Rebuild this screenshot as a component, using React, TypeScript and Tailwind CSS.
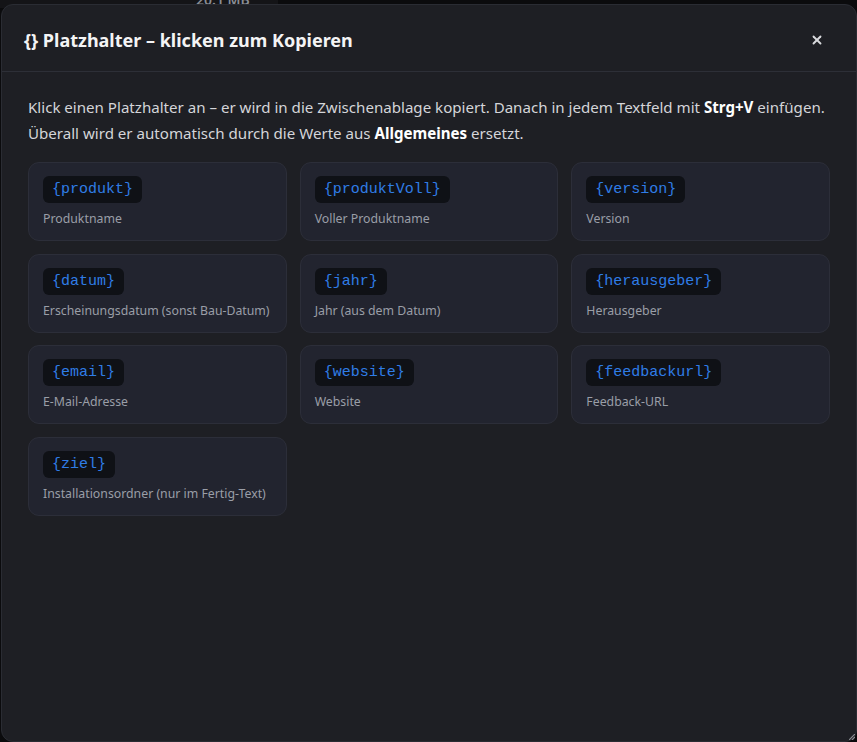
import React from "react";
import { X } from "lucide-react";

type Placeholder = { key: string; label: string };

const placeholders: Placeholder[] = [
  { key: "{produkt}", label: "Produktname" },
  { key: "{produktVoll}", label: "Voller Produktname" },
  { key: "{version}", label: "Version" },
  { key: "{datum}", label: "Erscheinungsdatum (sonst Bau-Datum)" },
  { key: "{jahr}", label: "Jahr (aus dem Datum)" },
  { key: "{herausgeber}", label: "Herausgeber" },
  { key: "{email}", label: "E-Mail-Adresse" },
  { key: "{website}", label: "Website" },
  { key: "{feedbackurl}", label: "Feedback-URL" },
  { key: "{ziel}", label: "Installationsordner (nur im Fertig-Text)" },
];

function PlaceholderCard({ item }: { item: Placeholder }) {
  return (
    <button
      type="button"
      className="flex flex-col items-start rounded-[11px] border border-[#2c2e39] bg-[#22242f] px-[14px] pt-[13px] pb-[12px] text-left"
    >
      <span className="flex h-[27px] items-center rounded-[6px] bg-[#0f1116] px-[9px] text-[15px] leading-none text-[#2f7de6] [font-family:'Liberation_Mono',monospace]">
        {item.key}
      </span>
      <span className="mt-[7px] whitespace-nowrap text-[12.3px] leading-[18px] text-[#9a9ea7]">
        {item.label}
      </span>
    </button>
  );
}

export default function App() {
  return (
    <div className="relative h-[742px] w-[857px] overflow-hidden bg-[#0b0b0d] [font-family:'Noto_Sans',sans-serif]">
      {/* app behind the overlay */}
      <div className="absolute left-0 top-0 h-[8px] w-[278px] bg-[#141417]" />
      <div className="absolute left-[196px] top-[-11px] text-[14px] font-semibold text-[#8a8d94]">
        20.1 MB
      </div>

      {/* dialog */}
      <div className="absolute left-[1px] top-[4px] flex h-[738px] w-[856px] flex-col rounded-[12px] border border-[#2a2c33] bg-[#1e1f24]">
        <div className="flex items-center justify-between border-b border-[#2d2f37] pl-[22px] pr-[32px] pt-[23px] pb-[19px]">
          <h2 className="text-[18px] font-bold leading-[24px] text-[#f4f4f5]">
            {"{}"} Platzhalter – klicken zum Kopieren
          </h2>
          <X size={14} strokeWidth={3.2} className="text-[#d8d9dd]" />
        </div>

        <div className="px-[26px] pt-[22px]">
          <p className="text-[15.1px] leading-[26px] text-[#d4d5d9]">
            Klick einen Platzhalter an – er wird in die Zwischenablage kopiert. Danach in jedem
            Textfeld mit <b className="font-bold text-white">Strg+V</b> einfügen.
            <br />
            Überall wird er automatisch durch die Werte aus{" "}
            <b className="font-bold text-white">Allgemeines</b> ersetzt.
          </p>

          <div className="mt-[16px] grid grid-cols-3 gap-x-[13px] gap-y-[12.5px]">
            {placeholders.map((p) => (
              <PlaceholderCard key={p.key} item={p} />
            ))}
          </div>
        </div>

        {/* resize grip */}
        <svg
          className="absolute bottom-[1px] right-[1px]"
          width="6"
          height="6"
          viewBox="0 0 6 6"
        >
          <path d="M6 0 L0 6" stroke="#8b8d93" strokeWidth="1.2" />
          <path d="M6 3 L3 6" stroke="#8b8d93" strokeWidth="1.2" />
        </svg>
      </div>
    </div>
  );
}
